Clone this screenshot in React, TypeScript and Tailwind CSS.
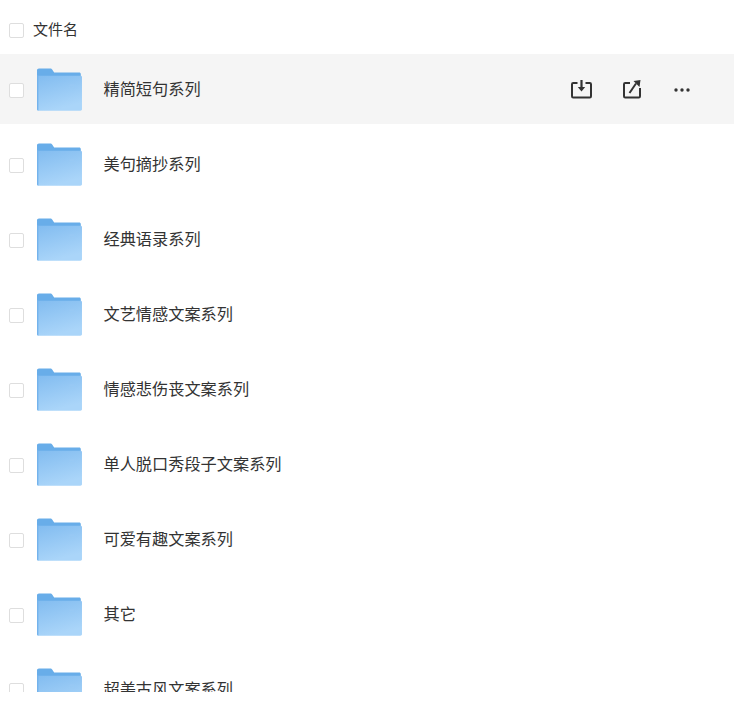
import React from 'react';

const files = [
  '精简短句系列',
  '美句摘抄系列',
  '经典语录系列',
  '文艺情感文案系列',
  '情感悲伤丧文案系列',
  '单人脱口秀段子文案系列',
  '可爱有趣文案系列',
  '其它',
  '超美古风文案系列',
];

const FolderIcon = () => (
  <svg width="45" height="43" viewBox="0 0 46 44" className="block shrink-0">
    <defs>
      <linearGradient id="folderFront" x1="0" y1="0" x2="0.35" y2="1">
        <stop offset="0" stopColor="#82bcf0" />
        <stop offset="1" stopColor="#aad5f9" />
      </linearGradient>
    </defs>
    {/* back with tab */}
    <path
      d="M0 2.500C0 1.200 .8.500 2 .5h11.500c1 0 1.600.4 2.200 1.200L17.500 4.500H43c1.200 0 1.800.7 1.800 1.800V10H0z"
      fill="#68ade9"
    />
    {/* front */}
    <path d="M0 8h44.500c.9 0 1.500.6 1.500 1.500v32.700c0 .9-.7 1.500-1.600 1.500H1.600C.7 43.700 0 43 0 42.200z" fill="url(#folderFront)" />
    <path d="M0 8h1.400v35.700C.6 43.600 0 43 0 42.200z" fill="#74b3ec" />
    <rect x="33" y="17" width="5" height="1" fill="#9acaf4" />
    <rect x="33" y="20" width="5" height="1" fill="#9acaf4" />
  </svg>
);

const Checkbox = () => (
  <span className="block w-[15px] h-[15px] shrink-0 rounded-[2px] border border-[#dedede] bg-white mt-[2px]" />
);

const DownloadIcon = () => (
  <svg width="21" height="20" viewBox="0 0 21 20" fill="none" stroke="#333" className="block">
    <path d="M6.500 4H2.200C1.500 4 1 4.500 1 5.200v12.100c0 .7.5 1.200 1.200 1.200h16.600c.7 0 1.200-.5 1.200-1.200V5.200C20 4.500 19.500 4 18.800 4H14.500" strokeWidth="2" />
    <path d="M10.500 1v8" strokeWidth="2.200" />
    <path d="M6.800 8h7.400l-3.700 4.500z" fill="#333" stroke="none" />
  </svg>
);

const ShareIcon = () => (
  <svg width="19" height="20" viewBox="0 0 19 20" fill="none" stroke="#333" className="block">
    <path d="M7 4H2.200C1.500 4 1 4.500 1 5.200v12.100c0 .7.5 1.200 1.200 1.200h13.600c.7 0 1.200-.5 1.200-1.200V9" strokeWidth="2" />
    <path d="M6.500 14 13 4.500" strokeWidth="2" />
    <path d="M10.500 2 17.500 1 16.500 8z" fill="#333" stroke="none" />
  </svg>
);

const MoreIcon = () => (
  <svg width="16" height="4" viewBox="0 0 16 4" fill="#333" className="block">
    <circle cx="2" cy="2" r="1.700" />
    <circle cx="8" cy="2" r="1.700" />
    <circle cx="14" cy="2" r="1.700" />
  </svg>
);

const App: React.FC = () => {
  return (
    <div
      className="w-[734px] h-[692px] overflow-hidden bg-white text-[#333]"
      style={{ fontFamily: '"Noto Sans CJK SC", "Noto Sans", sans-serif' }}
    >
      <div className="flex items-center h-[54px] pl-[9px] pt-[5px]">
        <Checkbox />
        <span className="ml-[9px] text-[15px] leading-6 mt-[-1px]">文件名</span>
      </div>

      {files.map((name, i) => (
        <div
          key={name}
          className={`flex items-center h-[70px] mb-[5px] pl-[9px] ${i === 0 ? 'bg-[#f5f5f5]' : ''}`}
        >
          <Checkbox />
          <div className="ml-[12.500px] mt-[1px]">
            <FolderIcon />
          </div>
          <span className="ml-[22px] mt-[-2px] text-[16.200px] leading-6">{name}</span>
          {i === 0 && (
            <div className="ml-auto flex items-center pr-[44px]">
              <DownloadIcon />
              <div className="ml-[31px]">
                <ShareIcon />
              </div>
              <div className="ml-[32px] mt-[1px]">
                <MoreIcon />
              </div>
            </div>
          )}
        </div>
      ))}
    </div>
  );
};

export default App;
